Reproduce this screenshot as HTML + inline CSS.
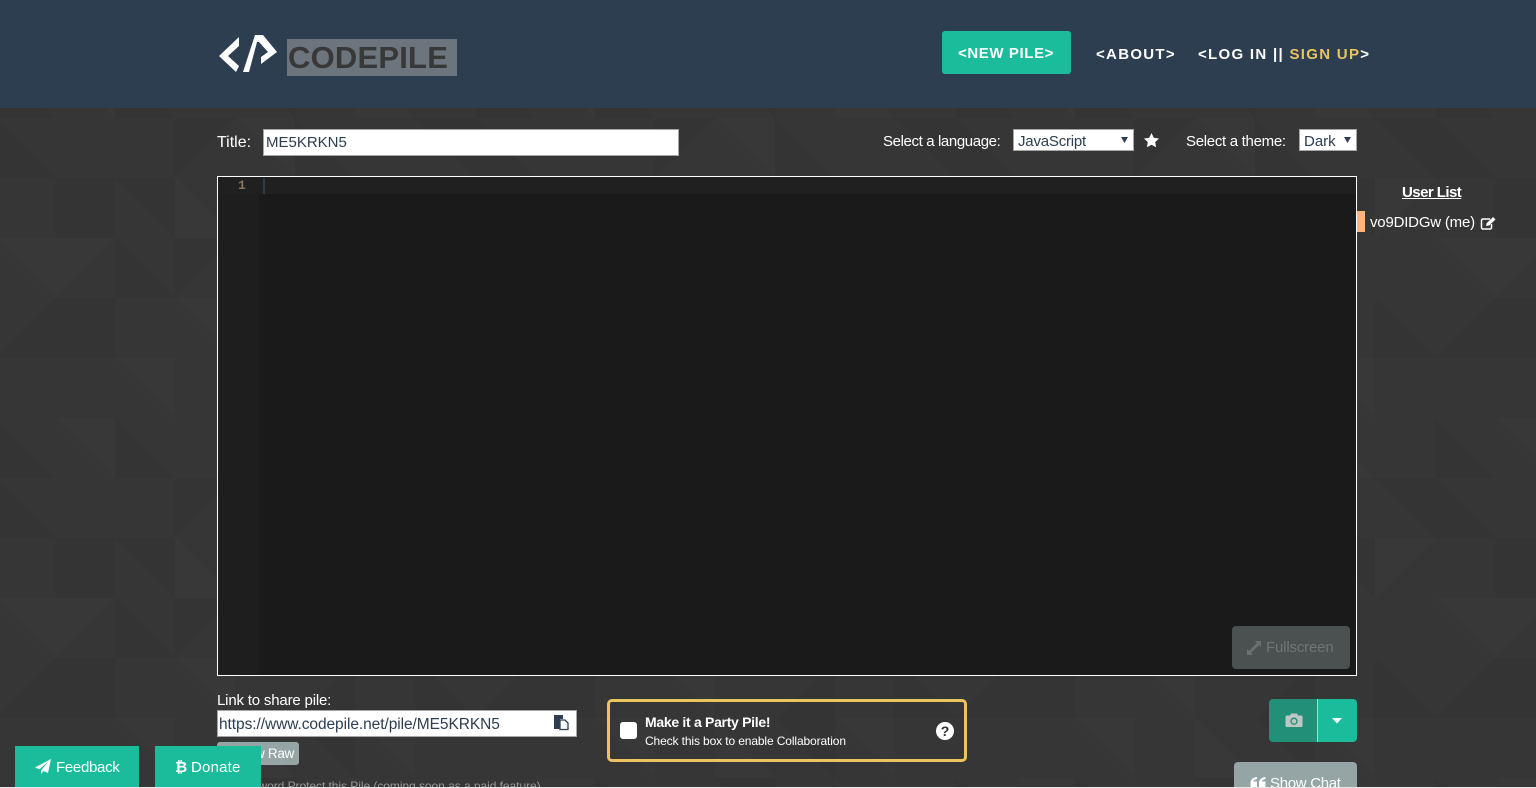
<!DOCTYPE html>
<html><head><meta charset="utf-8"><title>CodePile</title>
<style>
html,body{margin:0;padding:0;width:1536px;height:788px;overflow:hidden;background:#363636}
body{position:relative;font-family:"Liberation Sans",sans-serif;color:#fff}
.t{position:absolute;white-space:nowrap}
.b{position:absolute;box-sizing:border-box}
svg{position:absolute;display:block}
</style></head><body>
<svg style="left:0;top:108px" width="1536" height="680" viewBox="0 108 1536 680">
<defs><pattern id="p" x="-5" y="118" width="480" height="360" patternUnits="userSpaceOnUse">
<rect width="480" height="360" fill="#363636"/>
<path fill="#343434" d="M60 60h60v60H60zM120 60h60v60zM0 0l60 60H0zM180 0h60l-60 60zM60 180h60v60zM120 120l60 60h-60zM60 180l-60 60h60zM120 240L60 180v60zM180 120h60l-60 60zM240 180l60-60v60zM300 240h60v60zM360 60h60v60zM420 0h60v60zM420 180l60 60h-60zM300 0l60 60h-60zM240 300h60v60zM0 300l60 60H0zM120 300l60 60h-60zM360 180l-60 60h60z"/>
<path fill="#383838" d="M0 120h60l-0 60zM60 120h60l-60 60zM120 240h60v60zM180 180h60v60zM240 240l60 60h-60zM300 120h60v60zM420 60h60l-60 60zM360 240h60v60zM60 300h60v60zM180 60l60 60h-60zM240 0h60v60zM360 300l60 60h-60z"/>
</pattern></defs>
<rect x="0" y="108" width="1536" height="680" fill="url(#p)"/>
</svg>

<div class="b" style="left:0;top:0;width:1536px;height:108px;background:#2c3e50"></div>
<svg style="left:0;top:0" width="300" height="108"><path fill="#fff" d="M219 56 239 37 239 46 228 56 239 66 236 72zM243 72 255 35 263 35 277 52 261 64 261 57 268 52 259 42 257 42 249 72z"/></svg>
<div class="b" style="left:287px;top:39px;width:170px;height:37px;background:#6c757d"></div>
<div class="t" style="left:288px;top:39px;font-size:31px;line-height:37px;font-weight:bold;color:#383838;letter-spacing:.2px">CODEPILE</div>

<div class="b" style="left:942px;top:31px;width:129px;height:43px;background:#1abc9c;border-radius:3px"></div>
<div class="t" style="left:958px;top:45px;font-size:15px;line-height:18px;font-weight:bold;letter-spacing:.6px">&lt;NEW PILE&gt;</div>
<div class="t" style="left:1096px;top:46px;font-size:15px;line-height:18px;font-weight:bold;letter-spacing:1.3px">&lt;ABOUT&gt;</div>
<div class="t" style="left:1198px;top:46px;font-size:15px;line-height:18px;font-weight:bold;letter-spacing:1.3px">&lt;LOG IN || <span style="color:#e9c45f">SIGN UP</span>&gt;</div>

<div class="t" style="left:217px;top:134px;font-size:16px;line-height:18px">Title:</div>
<div class="b" style="left:263px;top:129px;width:416px;height:27px;background:#fff;border:1px solid #a5a5a5"></div>
<div class="t" style="left:266px;top:134px;font-size:15px;line-height:18px;color:#2c3e50">ME5KRKN5</div>

<div class="t" style="left:883px;top:133px;font-size:15px;line-height:18px;letter-spacing:-.38px">Select a language:</div>
<div class="b" style="left:1013px;top:129px;width:121px;height:22px;background:#fff;border:1px solid #a5a5a5"></div>
<div class="t" style="left:1018px;top:133px;font-size:15px;line-height:18px;color:#2c3e50;letter-spacing:-.2px">JavaScript</div>
<svg style="left:1120px;top:136px" width="10" height="8"><path fill="#2c3e50" d="M1 1h7L4.500 7z"/></svg>
<svg style="left:1143px;top:132px" width="17" height="17" viewBox="0 0 17 17"><path fill="#fff" d="M8.500 1l2.300 4.800 5.200.7-3.800 3.600.9 5.200-4.600-2.500-4.600 2.500.9-5.200L1 6.500l5.200-.7z"/></svg>
<div class="t" style="left:1186px;top:133px;font-size:15px;line-height:18px;letter-spacing:-.3px">Select a theme:</div>
<div class="b" style="left:1299px;top:129px;width:58px;height:22px;background:#fff;border:1px solid #a5a5a5"></div>
<div class="t" style="left:1304px;top:133px;font-size:15px;line-height:18px;color:#2c3e50">Dark</div>
<svg style="left:1343px;top:136px" width="10" height="8"><path fill="#2c3e50" d="M1 1h7L4.500 7z"/></svg>

<div class="b" style="left:217px;top:176px;width:1140px;height:500px;background:#1a1a1a;border:1px solid #fff"></div>
<div class="b" style="left:218px;top:177px;width:41px;height:498px;background:#1e1e1e"></div>
<div class="b" style="left:218px;top:177px;width:1138px;height:17px;background:#202020"></div>
<div class="b" style="left:263px;top:178px;width:2px;height:16px;background:#2f3b4d"></div>
<div class="t" style="left:238px;top:178px;font-size:13px;line-height:16px;color:#857659;font-family:'Liberation Mono',monospace;font-weight:bold">1</div>

<div class="t" style="left:1402px;top:184px;font-size:15px;line-height:18px;font-weight:bold;text-decoration:underline;letter-spacing:-.55px">User List</div>
<div class="b" style="left:1357px;top:211px;width:8px;height:21px;background:#ffb380"></div>
<div class="t" style="left:1370px;top:214px;font-size:15px;line-height:18px;letter-spacing:-.2px">vo9DIDGw (me)</div>
<svg style="left:1480px;top:216px" width="17" height="15" viewBox="0 0 17 15"><path fill="none" stroke="#fff" stroke-width="1.500" d="M10 3H3a1.500 1.500 0 0 0-1.500 1.500v7A1.500 1.500 0 0 0 3 13h7a1.500 1.500 0 0 0 1.500-1.500V8"/><path fill="#fff" d="M6 10l.6-2.800L13 1l2.500 2.500-6.400 6z"/></svg>

<div class="b" style="left:1232px;top:626px;width:118px;height:43px;background:#4b5151;border-radius:4px"></div>
<svg style="left:1246px;top:640px" width="16" height="16" viewBox="0 0 16 16"><path fill="#6b7070" d="M9 1h6v6l-2-2-8 8 2 2H1V9l2 2 8-8z"/></svg>
<div class="t" style="left:1266px;top:639px;font-size:15px;line-height:18px;color:#6f7474;letter-spacing:-.17px">Fullscreen</div>

<div class="t" style="left:217px;top:692px;font-size:15px;line-height:18px;letter-spacing:-.18px">Link to share pile:</div>
<div class="b" style="left:217px;top:710px;width:360px;height:27px;background:#fff;border:1px solid #a5a5a5"></div>
<div class="t" style="left:219px;top:716px;font-size:15.500px;line-height:18px;color:#2c3e50;letter-spacing:-.07px">https://www.codepile.net/pile/ME5KRKN5</div>
<svg style="left:553px;top:714px" width="16" height="17" viewBox="0 0 16 17"><path fill="#2c3e50" d="M1 1h9v4H7v10H1z"/><path fill="#fff" stroke="#2c3e50" stroke-width="1.300" d="M7 6h5l3 3v6.500H7z"/></svg>

<div class="b" style="left:217px;top:742px;width:82px;height:23px;background:#95a5a6;border-radius:3px"></div>
<div class="t" style="left:255px;top:745px;font-size:13.500px;line-height:17px;letter-spacing:-.3px">w Raw</div>
<div class="t" style="left:232px;top:778px;font-size:12px;line-height:17px;color:#999;letter-spacing:-.05px">Password Protect this Pile (coming soon as a paid feature)</div>

<div class="b" style="left:607px;top:699px;width:360px;height:63px;border:3px solid #e9c45f;border-radius:5px"></div>
<div class="b" style="left:620px;top:722px;width:17px;height:17px;background:#fff;border-radius:3px"></div>
<div class="t" style="left:645px;top:713px;font-size:14px;line-height:18px;font-weight:bold;letter-spacing:-.3px">Make it a Party Pile!</div>
<div class="t" style="left:645px;top:733px;font-size:12px;line-height:16px;letter-spacing:-.12px">Check this box to enable Collaboration</div>
<div class="b" style="left:936px;top:722px;width:18px;height:18px;background:#fff;border-radius:50%;color:#2e2e2e;font-weight:bold;font-size:14px;line-height:18px;text-align:center">?</div>

<div class="b" style="left:1269px;top:699px;width:48px;height:43px;background:#229078;border-radius:4px 0 0 4px"></div>
<div class="b" style="left:1317px;top:699px;width:1px;height:43px;background:#a9d9cf"></div>
<div class="b" style="left:1318px;top:699px;width:39px;height:43px;background:#1abc9c;border-radius:0 4px 4px 0"></div>
<svg style="left:1285px;top:713px" width="18" height="15" viewBox="0 0 18 15"><path fill="#bfc7c5" fill-rule="evenodd" d="M2 2.500h3L6 .5h6l1 2h3a1.500 1.500 0 0 1 1.500 1.500v8.500A1.500 1.500 0 0 1 16 14H2A1.500 1.500 0 0 1 .5 12.500V4A1.500 1.500 0 0 1 2 2.500zM9 4.500a3.700 3.700 0 1 0 .01 0zM9 6a2.300 2.300 0 1 1-.01 0z"/></svg>
<svg style="left:1331px;top:717px" width="12" height="8"><path fill="#fff" d="M1 1h10L6 6.500z"/></svg>

<div class="b" style="left:1234px;top:762px;width:123px;height:30px;background:#95a5a6;border-radius:4px 4px 0 0"></div>
<svg style="left:1250px;top:776px" width="16" height="12" viewBox="0 0 16 12"><path fill="#fff" d="M7 1C3 1.500 .5 3.500.5 7v5H7V5.500H3.500C3.600 4.200 5 3.300 7 3zM15.500 1c-4 .5-6.500 2.500-6.500 6v5h6.500V5.500H12c.1-1.300 1.500-2.200 3.500-2.500z"/></svg>
<div class="t" style="left:1270px;top:775px;font-size:15px;line-height:18px;letter-spacing:-.3px">Show Chat</div>

<div class="b" style="left:15px;top:746px;width:124px;height:41px;background:#1abc9c"></div>
<svg style="left:35px;top:759px" width="16" height="15" viewBox="0 0 16 15"><path fill="#fff" d="M16 0 13 14 8.500 12 6 15V11.500L13 3 4.500 10.300 0 8.500z"/></svg>
<div class="t" style="left:56px;top:759px;font-size:15px;line-height:18px;letter-spacing:-.3px">Feedback</div>
<div class="b" style="left:155px;top:746px;width:106px;height:41px;background:#1abc9c"></div>
<div class="t" style="left:175px;top:759px;font-size:15px;line-height:18px;font-weight:bold">₿</div>
<div class="t" style="left:191px;top:759px;font-size:15px;line-height:18px;letter-spacing:.2px">Donate</div>
<div class="b" style="left:0;top:787px;width:1536px;height:1px;background:#e8e8e8"></div>
</body></html>
